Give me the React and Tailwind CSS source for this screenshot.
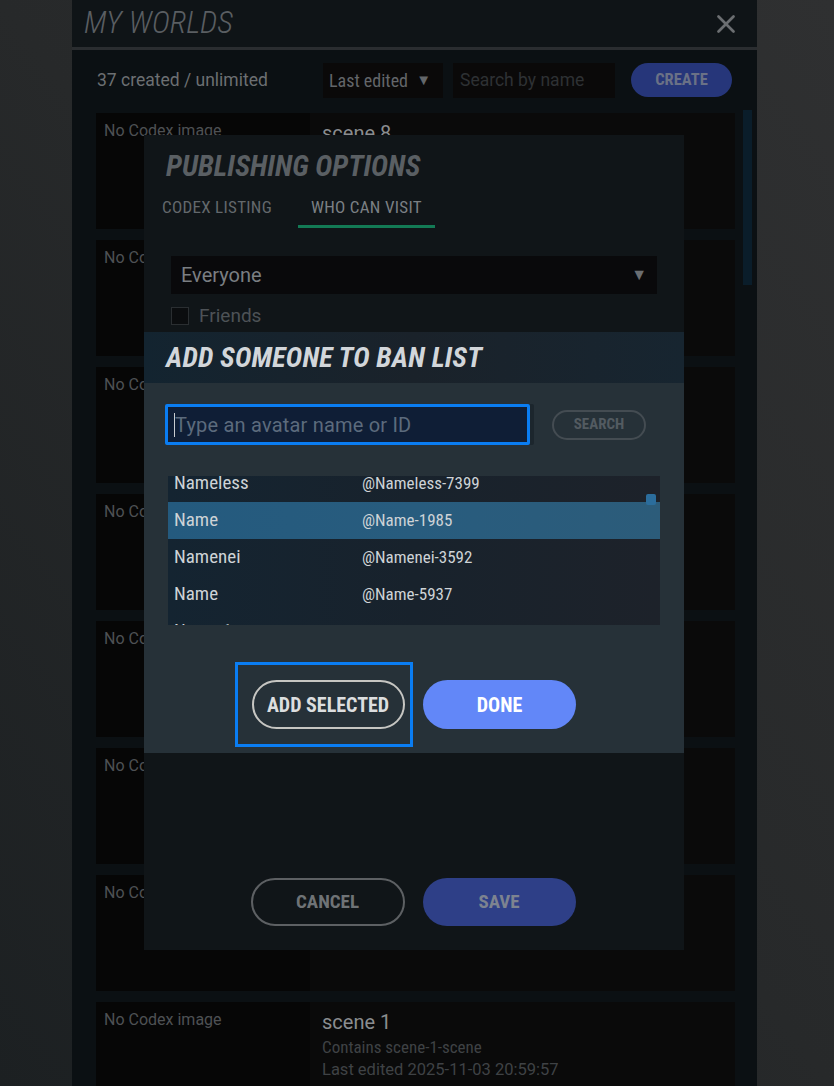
import { X } from "lucide-react";

const scenes = [8, 7, 6, 5, 4, 3, 2, 1];

const users = [
  { name: "Nameless", handle: "@Nameless-7399" },
  { name: "Name", handle: "@Name-1985", selected: true },
  { name: "Namenei", handle: "@Namenei-3592" },
  { name: "Name", handle: "@Name-5937" },
  { name: "Name 1", handle: "@Name-1-4712" },
];

const WorldCard = ({ n }) => (
  <div className="flex h-[116px] shrink-0 bg-[#080808]">
    <div className="w-[214px] bg-[#060606] px-2 pt-[6px] text-[16px] text-[#4e5154]">No Codex image</div>
    <div className="flex-1 bg-[#0a0a0a] px-3 pt-[7px]">
      <p className="text-[20px] leading-[26px] text-[#8a8d90]">scene {n}</p>
      <p className="text-[17px] leading-[24px] text-[#3f4245] font-stretch-[75%]">Contains scene-{n}-scene</p>
      <p className="text-[16.5px] leading-[22px] text-[#3f4245]">Last edited 2025-11-03 20:59:57</p>
    </div>
  </div>
);

const App = () => {
  return (
    <div className="relative h-[1086px] w-[834px] overflow-hidden bg-gradient-to-bl from-[#2f3031] via-[#27292a] to-[#1c2022] font-[Roboto,sans-serif]">
      {/* main panel */}
      <div className="ml-[72px] flex h-full w-[685px] flex-col bg-[#0b1013]">
        <div className="flex h-[50px] items-center justify-between border-b-[3px] border-[#2a2d30] bg-[#0f1417] pl-3 pr-4">
          <h1 className="text-[31px] font-light italic text-[#5a5e62] font-stretch-[75%]">MY WORLDS</h1>
          <X size={30} strokeWidth={2.2} className="text-[#6b6e71]" />
        </div>

        <div className="flex h-[60px] items-center pl-[25px] pr-[25px]">
          <span className="w-[226px] whitespace-nowrap text-[17.5px] text-[#6c6f72]">37 created / unlimited</span>
          <div className="flex h-[35px] w-[120px] items-center justify-between whitespace-nowrap bg-[#0a0909] pl-[6px] pr-[12px] text-[18px] text-[#63666a] font-stretch-[75%]">
            Last edited <span className="text-[15px]">▼</span>
          </div>
          <div className="ml-[10px] flex h-[35px] w-[162px] items-center whitespace-nowrap bg-[#0a0909] px-[7px] text-[17.5px] text-[#2e3134]">
            Search by name
          </div>
          <div className="ml-auto flex h-[34px] w-[101px] items-center justify-center rounded-full bg-[#26367a] text-[16.5px] font-bold text-[#6a7186] font-stretch-[75%]">
            CREATE
          </div>
        </div>

        <div className="flex min-h-0 flex-1 gap-[8px] pl-[24px] pr-[5px]">
          <div className="flex flex-1 flex-col gap-[11px] pt-[3px]">
            {scenes.map((n) => (
              <WorldCard key={n} n={n} />
            ))}
          </div>
          <div className="h-[175px] w-[9px] bg-[#0a1d2a]" />
        </div>
      </div>

      {/* publishing options dialog */}
      <div className="absolute left-[144px] top-[135px] flex h-[815px] w-[540px] flex-col bg-[#101518]">
        <h2 className="pl-[22px] pt-[10px] text-[29px] font-bold italic text-[#5a5f63] font-stretch-[75%]">PUBLISHING OPTIONS</h2>
        <div className="mt-[6px] flex pl-[18px] text-[17px] tracking-[0.3px] text-[#63686c] font-stretch-[75%]">
          <div className="pb-[6px] pr-[26px]">CODEX LISTING</div>
          <div className="border-b-[3px] border-[#137a55] px-[13px] pb-[5px] text-[#7b8084]">WHO CAN VISIT</div>
        </div>
        <div className="mx-[27px] mt-[28px] flex h-[38px] items-center justify-between bg-[#09090b] pl-[10px] pr-[10px] text-[20px] text-[#7a7e82]">
          Everyone <span className="text-[16px] text-[#6a6e72]">▼</span>
        </div>
        <div className="ml-[27px] mt-[8px] flex items-center gap-[10px] text-[19px] text-[#4d5256]">
          <div className="h-[18px] w-[18px] border border-[#2a2e31] bg-[#0b0d0f]" />
          Friends
        </div>
        <div className="mt-auto flex justify-center gap-[18px] pb-[24px] pr-[2px]">
          <div className="flex h-[48px] w-[154px] items-center justify-center rounded-full border-2 border-[#5d6063] text-[19px] font-bold text-[#6f7376] font-stretch-[75%]">
            CANCEL
          </div>
          <div className="flex h-[48px] w-[153px] items-center justify-center rounded-full bg-[#2e3f87] text-[19px] font-bold text-[#7d8390] font-stretch-[75%]">
            SAVE
          </div>
        </div>
      </div>

      {/* ban list dialog */}
      <div className="absolute left-[144px] top-[332px] flex h-[421px] w-[540px] flex-col bg-[#263138]">
        <div className="flex h-[51px] items-center bg-gradient-to-r from-[#132430] via-[#1a222a] to-[#172530] pl-[22px]">
          <h2 className="text-[28px] font-bold italic tracking-[0.2px] text-[#d2d6da] font-stretch-[75%]">ADD SOMEONE TO BAN LIST</h2>
        </div>
        <div className="mt-[21px] flex items-center pl-[21px]">
          <div className="flex h-[41px] w-[365px] items-center rounded-[2px] border-[3px] border-[#0a7df2] bg-[#0f1e36] pl-[6px] text-[20px] tracking-[0.2px] text-[#5c6b7d] shadow-[4px_0_0_#1c262d]">
            <span className="h-[24px] w-px bg-[#c8ccd0]" />
            Type an avatar name or ID
          </div>
          <div className="ml-[22px] flex h-[30px] w-[94px] items-center justify-center rounded-full border-2 border-[#444c52] text-[15px] font-bold text-[#535b61] font-stretch-[75%]">
            SEARCH
          </div>
        </div>
        <div className="relative mx-[24px] mt-[31px] h-[149px] overflow-hidden bg-gradient-to-r from-[#142431] via-[#18222c] to-[#1d222a]">
          <div className="-mt-[11px]">
            {users.map((u, i) => (
              <div
                key={i}
                className={`flex h-[37px] items-center pl-[6px] ${
                  u.selected ? "bg-gradient-to-r from-[#245a7e] via-[#285c7e] to-[#2c5c7a]" : ""
                }`}
              >
                <span className="w-[188px] text-[19px] text-[#ced3d7] font-stretch-[75%]">{u.name}</span>
                <span className="text-[17px] text-[#ced3d7] font-stretch-[75%]">{u.handle}</span>
              </div>
            ))}
          </div>
          <div className="absolute right-[4px] top-[18px] h-[11px] w-[10px] rounded-[2px] bg-[#2b6d9c]" />
        </div>
        <div className="mt-[37px] flex justify-center gap-[10px] pr-[17px]">
          <div className="flex h-[85px] w-[178px] items-center justify-center border-[3px] border-[#0a7df2] pl-[8px]">
            <div className="flex h-[49px] w-[153px] shrink-0 items-center justify-center rounded-full border-2 border-[#c6c6c2] text-[20px] font-bold text-[#dcdedf] font-stretch-[75%]">
              ADD SELECTED
            </div>
          </div>
          <div className="flex items-center">
            <div className="flex h-[49px] w-[153px] items-center justify-center rounded-full bg-[#6287f8] text-[20px] font-bold text-white font-stretch-[75%]">
              DONE
            </div>
          </div>
        </div>
      </div>
    </div>
  );
};

export default App;
